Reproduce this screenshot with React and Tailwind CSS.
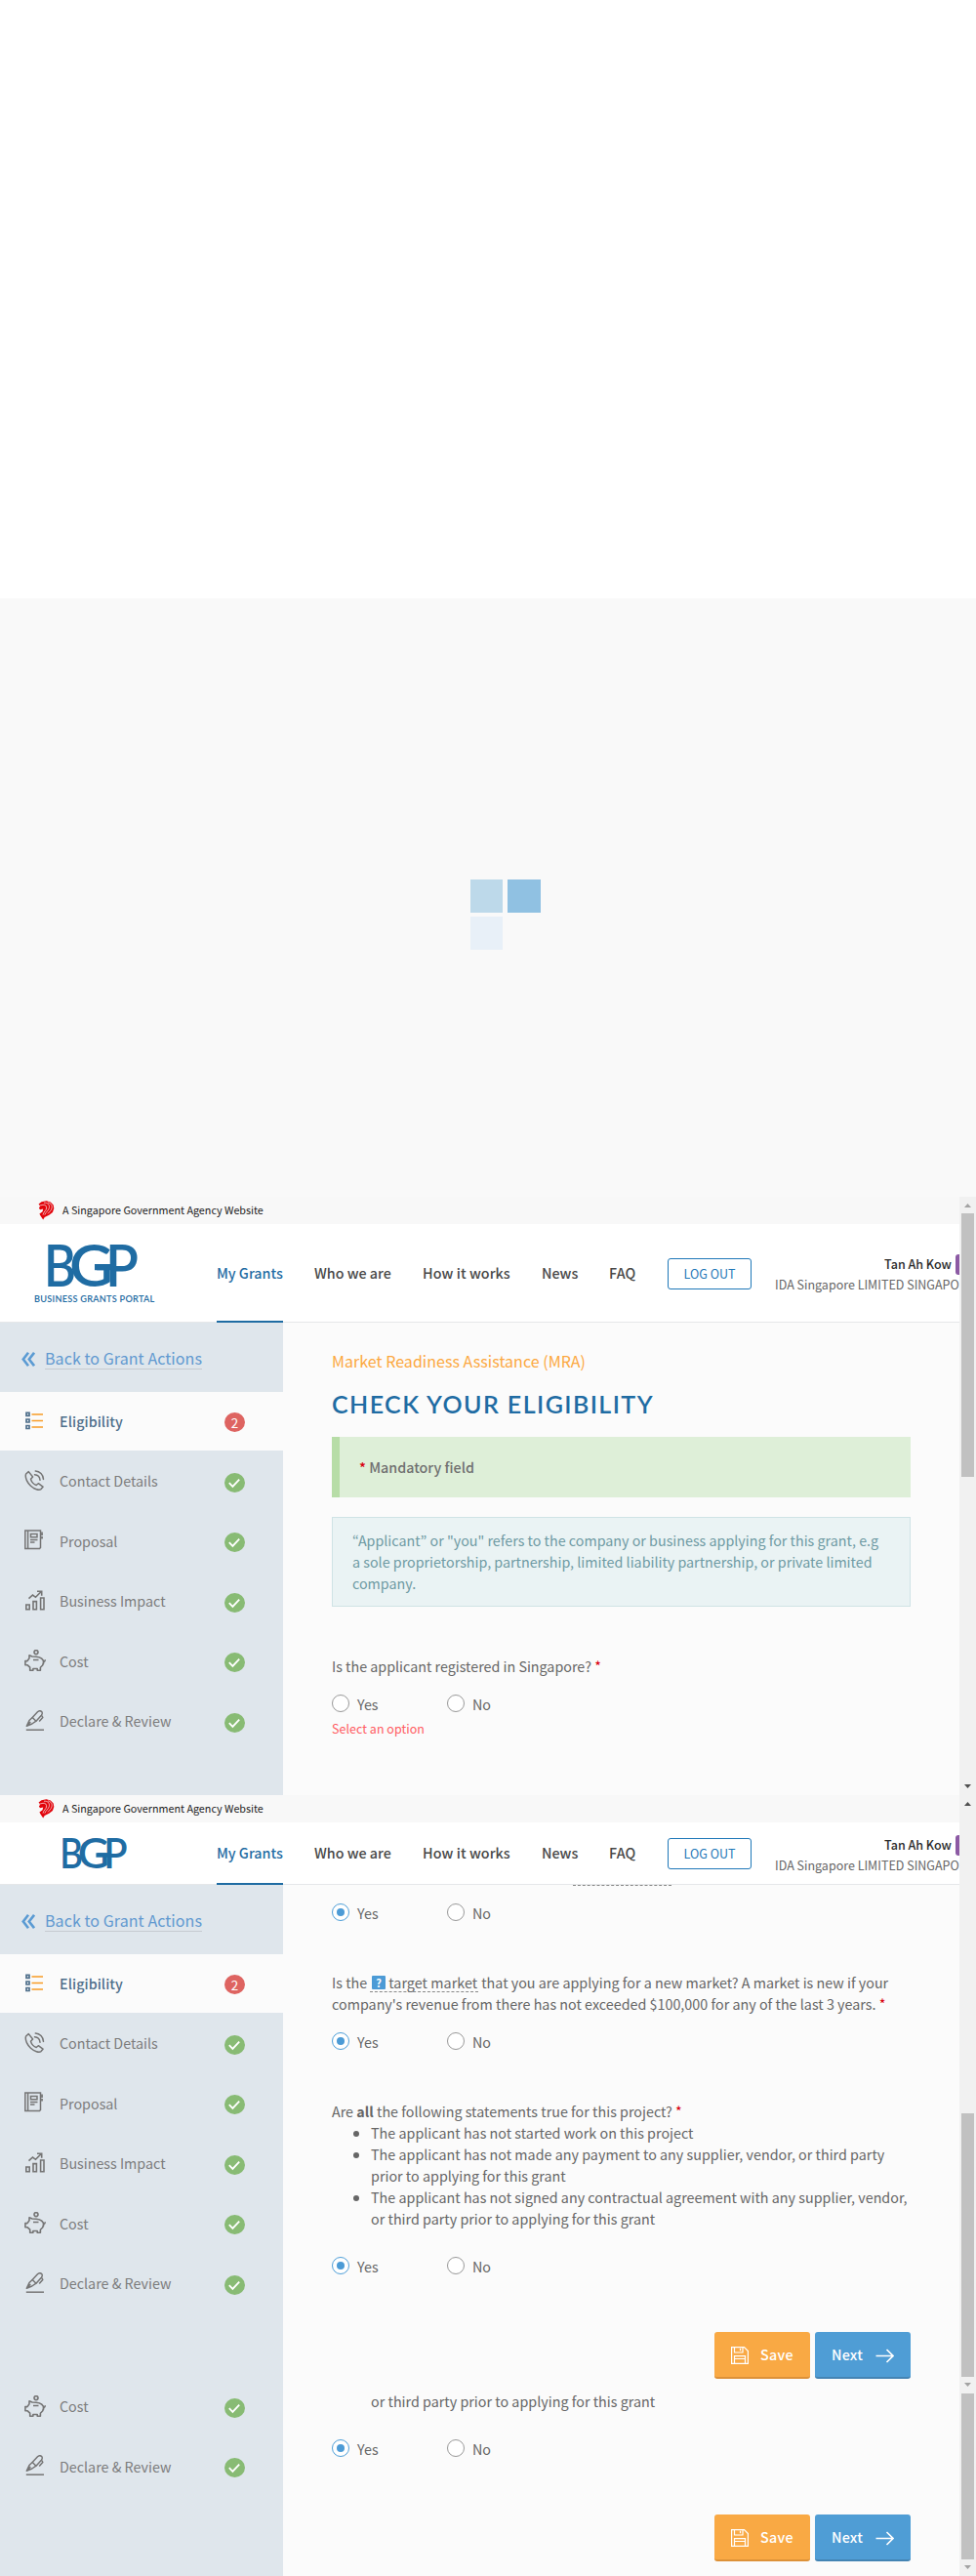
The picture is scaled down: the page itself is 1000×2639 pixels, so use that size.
import React from "react";

const ICON = "w-[22px] h-[22px] shrink-0 block";

function Lion() {
  return (
    <svg className="w-[17px] h-5 shrink-0" viewBox="0 0 17 20" fill="none">
      <path d="M0.6 3.600 3.500 1.300 8.500 .300l4.300 1.200 2.900 3 .6 3.400-1.400 4.100-3.600 2.800-4.600 2.200-1.500 2.600-2.400-3.500-1.400-2.700L4.600 11.200 5.200 8.500 2 9.200.9 7.400 2 6z" fill="#e2040b" />
      <path d="M1 5.200 5 4.300c2.600-.3 4 1.300 3.600 3.700-.5 2.400-3 3.400-3.600 6.600M6 2.200c4-.3 6 2 5.400 5.200-.5 2.800-3.600 4.200-4.600 7.200M10 1.800c3.500.9 4.800 3.400 4 6.200-.6 2.200-2.400 3.500-4 5.400" stroke="#f8f8f8" strokeWidth=".7" />
    </svg>
  );
}

function ListIcon() {
  return (
    <svg className={ICON} viewBox="0 0 22 22" fill="none">
      <path d="M2 2.300h3v3H2zM2 9h3v3H2zM2 15.500h3v3H2z" stroke="#4f6f8b" strokeWidth="1.700" />
      <path d="M7.500 4h11.500M7.500 10.500h11.500M7.500 17h11.500" stroke="#f89c26" strokeWidth="1.700" />
    </svg>
  );
}

function PhoneIcon() {
  return (
    <svg className={ICON} viewBox="0 0 22 22" fill="none" stroke="#757575" strokeWidth="1.500" strokeLinejoin="round" strokeLinecap="round">
      <path d="M4.300 1.600 1.600 4C.2 8 3.500 13.500 6.500 16.300c3.500 3.200 8.500 4.700 10.500 3.300l2-2.400-4.700-3.500-2.100 1.800c-2.200-.7-5-3.500-5.700-6.300L8.600 7z" />
      <path d="M10.500 4.700c2.900.2 5.200 2.300 5.500 5.500M11.300 1c4.500.2 8 3.800 8.200 8.400" />
    </svg>
  );
}

function BookIcon() {
  return (
    <svg className={ICON} viewBox="0 0 22 22" fill="none" stroke="#757575" strokeWidth="1.500">
      <path d="M.8 1h15.700v17.500l-1 1H.8zM3.600 1v18.500" />
      <path d="M6.500 4.500h6.500v3.300H6.500zM6 10.500h7.500M6 13h4.500" />
      <path d="M18 2.500v3.500M18 7v2.500" strokeWidth="1.800" />
    </svg>
  );
}

function ChartIcon() {
  return (
    <svg className={ICON} viewBox="0 0 22 22" fill="none" stroke="#757575" strokeWidth="1.600">
      <path d="M1.800 15h3.400v4.800H1.800zM9 11.600h3.400v8.200H9zM16.600 8h3.400v11.800h-3.400z" />
      <path d="M4.500 8.600 8.500 5l3 2.300 5.500-5.500M13 1.200h4.700v4.600" />
    </svg>
  );
}

function PigIcon() {
  return (
    <svg className={ICON} viewBox="0 0 22 22" fill="none" stroke="#757575" strokeWidth="1.600" strokeLinejoin="round">
      <circle cx="12" cy="2.600" r="2" />
      <path d="M8 7 5 5.800v3L3 11.600H.9v4.200h2.300l2.500 2.400v3h3.200v-1.700h4.300v1.700h3.200v-3l2.200-2.200c1.300-1.700 1.300-3.400.6-5.200C17.700 8.200 14 7 8 7z" />
      <path d="M9 10.500h5.500M19 12.300c1.500.2 2.200-.7 2.300-2" />
    </svg>
  );
}

function PenIcon() {
  return (
    <svg className={ICON} viewBox="0 0 22 22" fill="none" stroke="#757575" strokeWidth="1.500" strokeLinejoin="round">
      <path d="M8.200 7.500 13.500 1.800c1.400-1.300 3-1.200 4-.4s1.100 2.400-.1 3.900L12 11.200z" />
      <path d="M8.200 7.500 5 10.500l-2.700 5.700L7.800 14 12 11.200M2.300 16.200l4-4.200M15.200 11.500l3.600-4-.9-1.800" />
      <path d="M1.800 20.200H20" />
    </svg>
  );
}

function Check() {
  return (
    <svg className="w-[21px] h-5 shrink-0" viewBox="0 0 21 20" fill="none">
      <ellipse cx="10.500" cy="10" rx="10.500" ry="10" fill="#88bb74" />
      <path d="m4.800 10.200 3.600 3.700 6.800-7.300" stroke="#fff" strokeWidth="1.800" />
    </svg>
  );
}

const steps = [
  { label: "Contact Details", Icon: PhoneIcon },
  { label: "Proposal", Icon: BookIcon },
  { label: "Business Impact", Icon: ChartIcon },
  { label: "Cost", Icon: PigIcon },
  { label: "Declare & Review", Icon: PenIcon },
];

function Step({ label, Icon }) {
  return (
    <div className="flex h-[61.5px] items-center pl-[25px]">
      <Icon />
      <div className="ml-[14px] w-[169px] pt-px text-[14.300px] leading-[22px] text-[#7c7c7c]">{label}</div>
      <div className="mt-1"><Check /></div>
    </div>
  );
}

function Sidebar() {
  return (
    <div className="w-[290px] shrink-0 bg-[#dfe6ec]">
      <div className="flex h-[71px] items-start pl-[22px] pt-[25px]">
        <svg className="mt-[5px] h-[15px] w-[14px]" viewBox="0 0 14 15" fill="none" stroke="#5b9bd3" strokeWidth="2.600">
          <path d="M7 .8 1.800 7.500 7 14.200M13 .8 7.800 7.500 13 14.200" />
        </svg>
        <span className="ml-[10px] h-[23px] border-b border-[#c6cad0] text-[16px] leading-[22px] tracking-[0.074px] text-[#6199d0]">Back to Grant Actions</span>
      </div>
      <div className="flex h-[60px] items-center bg-[#fbfbfb] pl-[25px]">
        <ListIcon />
        <div className="ml-[14px] w-[169px] text-[14.300px] font-medium leading-[22px] tracking-[0.060px] text-[#4f6f8b]">Eligibility</div>
        <div className="mt-0.5 flex h-5 w-[21px] items-center justify-center rounded-[50%] bg-[#de6461] pt-px text-[13.400px] text-white">2</div>
      </div>
      {steps.map((s) => <Step key={s.label} {...s} />)}
    </div>
  );
}

function Logo({ compact }) {
  return (
    <svg className={compact ? "ml-[64px] mt-4 h-8 w-[66px]" : "ml-[49px] mt-5 h-[44px] w-[92px]"} viewBox="0 0 92 44" fill="#1f6ca3" fontFamily="Lato" fontWeight="600">
      <text x="-4" y="43.500" fontSize="60" textLength="33" lengthAdjust="spacingAndGlyphs">B</text>
      <text x="22" y="43.500" fontSize="59" textLength="45" lengthAdjust="spacingAndGlyphs">G</text>
      <text x="59" y="43.500" fontSize="60" textLength="34" lengthAdjust="spacingAndGlyphs">P</text>
      <rect x="48" y="21" width="20" height="6.200" />
    </svg>
  );
}

function Header({ compact }) {
  return (
    <div className={compact ? "flex h-16 border-b border-[#e5e7e9] bg-white" : "flex h-[101px] border-b border-[#e5e7e9] bg-white"}>
      <div className="w-[222px] shrink-0">
        <Logo compact={compact} />
        {!compact && (
          <div className="ml-[35px] mt-[7px] font-[Lato] text-[9.200px] font-semibold leading-3 tracking-[0.240px] text-[#1f6ca3]">BUSINESS GRANTS PORTAL</div>
        )}
      </div>
      <div className={compact ? "flex h-16 shrink-0 items-center gap-8 text-[14.300px] font-medium leading-[22px] text-[#484848]" : "flex h-[101px] shrink-0 items-center gap-8 text-[14.300px] font-medium leading-[22px] text-[#484848]"}>
        <div className="flex h-full w-[68px] items-center border-b-2 border-[#1f6ca3] text-[#1f6ca3]">My Grants</div>
        <div className="w-[79px] pb-0.5">Who we are</div>
        <div className="w-[90px] pb-0.5 tracking-[0.080px]">How it works</div>
        <div className="w-[37px] pb-0.5">News</div>
        <div className="w-[28px] pb-0.5 tracking-[0.200px]">FAQ</div>
        <div className="flex h-8 w-[86px] items-center justify-center rounded-[3px] border border-[#1f78b8] text-[12.500px] font-normal text-[#1f78b8]">LOG OUT</div>
      </div>
      <div className={compact ? "w-[213px] shrink-0 overflow-hidden pt-[13px]" : "w-[213px] shrink-0 overflow-hidden pt-[31px]"}>
        <div className="flex h-[21px] justify-end text-[12.500px] font-medium leading-[20px] text-[#2c2c2c]">
          <span>Tan Ah Kow</span>
          <div className="ml-1 h-[21px] w-1 rounded-l-[3px] bg-[#8c5aa4]" />
        </div>
        <div className="ml-6 text-[12.500px] leading-[20px] text-[#666]">IDA Singapore LIMITED SINGAPO</div>
      </div>
    </div>
  );
}

function TopBar() {
  return (
    <div className="flex h-7 items-center bg-[#f8f8f8] pl-[39px] text-[10.760px] leading-7 text-[#222]">
      <Lion />
      <span className="ml-2">A Singapore Government Agency Website</span>
    </div>
  );
}

function Radios({ on }) {
  return (
    <div className="flex h-[18px] items-center text-[14.300px] leading-[18px] text-[#666]">
      <div className={on ? "flex h-[18px] w-[18px] items-center justify-center rounded-full border border-[#4f9fd8] bg-white" : "flex h-[18px] w-[18px] items-center justify-center rounded-full border border-[#999] bg-white"}>
        {on && <div className="h-2 w-2 rounded-full bg-[#4c9bd6]" />}
      </div>
      <div className="ml-2 w-[92px] pt-0.5">Yes</div>
      <div className="h-[18px] w-[18px] rounded-full border border-[#999] bg-white" />
      <div className="ml-2 pt-0.5">No</div>
    </div>
  );
}

function Buttons() {
  return (
    <div className="flex h-12 justify-end gap-[5px] text-[14.300px] font-medium text-white">
      <div className="flex h-12 w-[98px] items-center rounded-[3px] border-b-2 border-[#dd9138] bg-[#f9a944] pl-[17px]">
        <svg className="mt-0.5 h-[18px] w-[18px]" viewBox="0 0 18 18" fill="none" stroke="#fff" strokeWidth="1.200">
          <path d="M.6.600h12.900l3.900 3.900v12.900H.6zM3.500.600v5.400h8.500V.6M9.500 1.800v2.500M3.500 17.400V9.600h11v7.800M3.500 12.500h11" />
        </svg>
        <span className="ml-3 tracking-[0.300px]">Save</span>
      </div>
      <div className="flex h-12 w-[98px] items-center rounded-[3px] border-b-2 border-[#4484b4] bg-[#4f9dd5] pl-[17px]">
        <span className="w-8 tracking-[0.200px]">Next</span>
        <svg className="ml-[13px] mt-0.5 h-[15px] w-[19px]" viewBox="0 0 19 15" fill="none" stroke="#fff" strokeWidth="1.600">
          <path d="M.5 7.500h17M11.500 1l6.500 6.500-6.500 6.500" />
        </svg>
      </div>
    </div>
  );
}

function Arrow({ down, dark }) {
  return (
    <svg className="h-[17px] w-[17px] shrink-0" viewBox="0 0 17 17">
      <path d={down ? "M5 6h7L8.500 10z" : "M5 11h7L8.500 7z"} fill={dark ? "#505050" : "#a3a3a3"} />
    </svg>
  );
}

const Star = () => <span className="text-[#d9000d]">*</span>;

function Frame({ children, bar, h }) {
  return (
    <div className={h}>
      <div className="flex w-[983px] flex-col overflow-hidden bg-[#fbfbfb]">{children}</div>
      <div className="flex w-[17px] flex-col bg-[#f1f1f1]">{bar}</div>
    </div>
  );
}

export default function App() {
  return (
    <div className="w-[1000px] whitespace-nowrap bg-white font-['Noto_Sans_CJK_KR',sans-serif]">
      <div className="h-[613px]" />
      <div className="h-[613px] bg-[#f9f9f9] pl-[482px] pt-[288px]">
        <div className="grid grid-cols-[33px_34px] grid-rows-[34px_34px] gap-x-[5px] gap-y-1">
          <div className="bg-[#bdd9ea]" /><div className="bg-[#90c1e2]" /><div className="bg-[#e8f0f8]" />
        </div>
      </div>

      <Frame h="flex h-[613px]" bar={<><Arrow /><div className="ml-0.5 h-[270px] w-[13px] bg-[#c1c1c1]" /><div className="mt-auto h-[17px]"><Arrow down dark /></div></>}>
        <TopBar />
        <Header />
        <div className="flex flex-1">
          <Sidebar />
          <div className="w-[643px] pl-[50px] pt-[27px] text-[14.300px] leading-[22px] text-[#666]">
            <div className="text-[16px] leading-6 tracking-[0.028px] text-[#fba83f]">Market Readiness Assistance (MRA)</div>
            <div className="mt-[16px] h-8 font-[Lato] text-[25px] font-semibold leading-8 tracking-[1.430px] text-[#1f6ca3]">CHECK YOUR ELIGIBILITY</div>
            <div className="mt-[18px] flex h-[62px] items-center border-l-8 border-[#b7dda7] bg-[#deefd8] pl-[20px] font-medium text-[#707070]"><span><Star /> Mandatory field</span></div>
            <div className="mt-5 h-[92px] border border-[#cfe3e5] bg-[#eaf3f4] pl-5 pt-3 text-[#6e9aa3]">
              <div>“Applicant” or "you" refers to the company or business applying for this grant, e.g</div>
              <div>a sole proprietorship, partnership, limited liability partnership, or private limited</div>
              <div>company.</div>
            </div>
            <div className="mb-[18px] mt-[50px]">Is the applicant registered in Singapore? <Star /></div>
            <Radios />
            <div className="mt-1.5 text-[12.500px] tracking-[0.030px] text-[#ff5c62]">Select an option</div>
          </div>
        </div>
      </Frame>

      <Frame h="flex h-[613px]" bar={<><Arrow dark /><div className="ml-0.5 mt-[309px] h-[270px] w-[13px] bg-[#c1c1c1]" /><Arrow down /></>}>
        <TopBar />
        <Header compact />
        <div className="flex flex-1">
          <Sidebar />
          <div className="w-[643px] pl-[50px] text-[14.300px] leading-[22px] tracking-[0.018px] text-[#666]">
            <div className="mb-[18px] ml-[247px] w-[101px] border-t border-dashed border-[#888]" />
            <Radios on />
            <div className="mt-[52px] flex h-[22px]">
              <span>Is the</span>
              <span className="ml-[3px] flex h-[21px] w-[111px] border-b border-dashed border-[#888] pl-0.5">
                <span className="mt-1 h-[14px] w-[14px] rounded-[1px] bg-[#4c9bd6] text-center text-[11px] font-bold leading-[14px] text-white">?</span>
                <span className="ml-[3px] tracking-[0.054px]">target market</span>
              </span>
              <span className="ml-[3px]">that you are applying for a new market? A market is new if your</span>
            </div>
            <div className="mb-[18px]">company's revenue from there has not exceeded $100,000 for any of the last 3 years. <Star /></div>
            <Radios on />
            <div className="mt-[52px]">Are <b>all</b> the following statements true for this project? <Star /></div>
            <ul className="mb-[28px] list-disc pl-10">
              <li>The applicant has not started work on this project</li>
              <li>The applicant has not made any payment to any supplier, vendor, or third party<br />prior to applying for this grant</li>
              <li>The applicant has not signed any contractual agreement with any supplier, vendor,<br />or third party prior to applying for this grant</li>
            </ul>
            <Radios on />
            <div className="mt-[59px]"><Buttons /></div>
          </div>
        </div>
      </Frame>

      <Frame h="flex h-[187px]" bar={<><div className="ml-0.5 h-[170px] w-[13px] bg-[#c1c1c1]" /><Arrow down /></>}>
        <div className="flex flex-1">
          <div className="w-[290px] bg-[#dfe6ec]">
            <div className="-mt-[18px]">{steps.slice(3).map((s) => <Step key={s.label} {...s} />)}</div>
          </div>
          <div className="w-[643px] pl-[50px] text-[14.300px] leading-[22px] tracking-[0.018px] text-[#666]">
            <div className="mb-[28px] ml-10 -mt-[3px]">or third party prior to applying for this grant</div>
            <Radios on />
            <div className="mt-[59px]"><Buttons /></div>
          </div>
        </div>
      </Frame>
    </div>
  );
}
